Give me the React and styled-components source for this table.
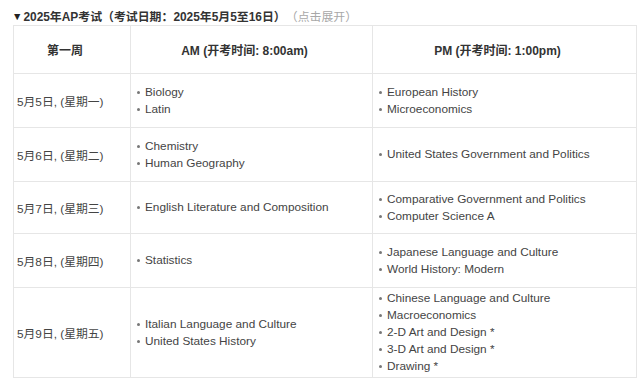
import React from "react";
import styled, { createGlobalStyle } from "styled-components";

const GlobalStyle = createGlobalStyle`
  html, body {
    margin: 0;
    padding: 0;
    background: #fff;
  }
  body {
    font-family: "Liberation Sans", Arial, "Noto Sans CJK SC", sans-serif;
    color: #333;
  }
`;

const Page = styled.div`
  width: 642px;
  height: 382px;
  padding: 6px 0 0 12px;
  box-sizing: border-box;
  overflow: hidden;
`;

const Summary = styled.div`
  display: flex;
  align-items: center;
  height: 19px;
  font-size: 11.9px;
  font-weight: bold;
  color: #333;
  white-space: nowrap;
`;

const Arrow = styled.span`
  font-size: 10.5px;
  margin-right: 1px;
  color: #222;
`;

const Hint = styled.span`
  font-weight: normal;
  color: #a8a8a8;
`;

const Table = styled.table`
  margin: 0 0 0 1px;
  border-collapse: collapse;
  table-layout: fixed;
  width: 623px;
  font-size: 11.8px;
  color: #444;
`;

const Th = styled.th`
  height: 47px;
  border: 1px solid #e6e6e6;
  padding: 0 14px 0 0;
  text-align: center;
  font-weight: bold;
  color: #333;
  font-size: 12px;
`;

const Td = styled.td`
  height: ${(p) => p.$h}px;
  border: 1px solid #e6e6e6;
  padding: 0 4px 0 3px;
  vertical-align: middle;
  box-sizing: border-box;
`;

const List = styled.ul`
  list-style: none;
  margin: 0;
  padding: 0 0 0 3px;
  li {
    display: flex;
    align-items: center;
    height: 17px;
    line-height: 17px;
    white-space: nowrap;
  }
  li::before {
    content: "";
    flex: none;
    width: 3px;
    height: 3px;
    border-radius: 50%;
    background: #777;
    margin: 0 5px 0 0;
  }
`;

const rows = [
  { date: "5月5日, (星期一)", h: 54, am: ["Biology", "Latin"], pm: ["European History", "Microeconomics"] },
  { date: "5月6日, (星期二)", h: 54, am: ["Chemistry", "Human Geography"], pm: ["United States Government and Politics"] },
  { date: "5月7日, (星期三)", h: 52, am: ["English Literature and Composition"], pm: ["Comparative Government and Politics", "Computer Science A"] },
  { date: "5月8日, (星期四)", h: 54, am: ["Statistics"], pm: ["Japanese Language and Culture", "World History: Modern"] },
  {
    date: "5月9日, (星期五)",
    h: 90,
    am: ["Italian Language and Culture", "United States History"],
    pm: ["Chinese Language and Culture", "Macroeconomics", "2-D Art and Design *", "3-D Art and Design *", "Drawing *"],
  },
];

export default function App() {
  return (
    <Page>
      <GlobalStyle />
      <Summary>
        <Arrow>▼</Arrow>
        2025年AP考试（考试日期：2025年5月5至16日）
        <Hint>（点击展开）</Hint>
      </Summary>
      <Table>
        <colgroup>
          <col style={{ width: 117 }} />
          <col style={{ width: 242 }} />
          <col style={{ width: 264 }} />
        </colgroup>
        <thead>
          <tr>
            <Th>第一周</Th>
            <Th>AM (开考时间: 8:00am)</Th>
            <Th>PM (开考时间: 1:00pm)</Th>
          </tr>
        </thead>
        <tbody>
          {rows.map((r) => (
            <tr key={r.date}>
              <Td $h={r.h}>{r.date}</Td>
              <Td $h={r.h}>
                <List>
                  {r.am.map((s) => (
                    <li key={s}>{s}</li>
                  ))}
                </List>
              </Td>
              <Td $h={r.h}>
                <List>
                  {r.pm.map((s) => (
                    <li key={s}>{s}</li>
                  ))}
                </List>
              </Td>
            </tr>
          ))}
        </tbody>
      </Table>
    </Page>
  );
}
